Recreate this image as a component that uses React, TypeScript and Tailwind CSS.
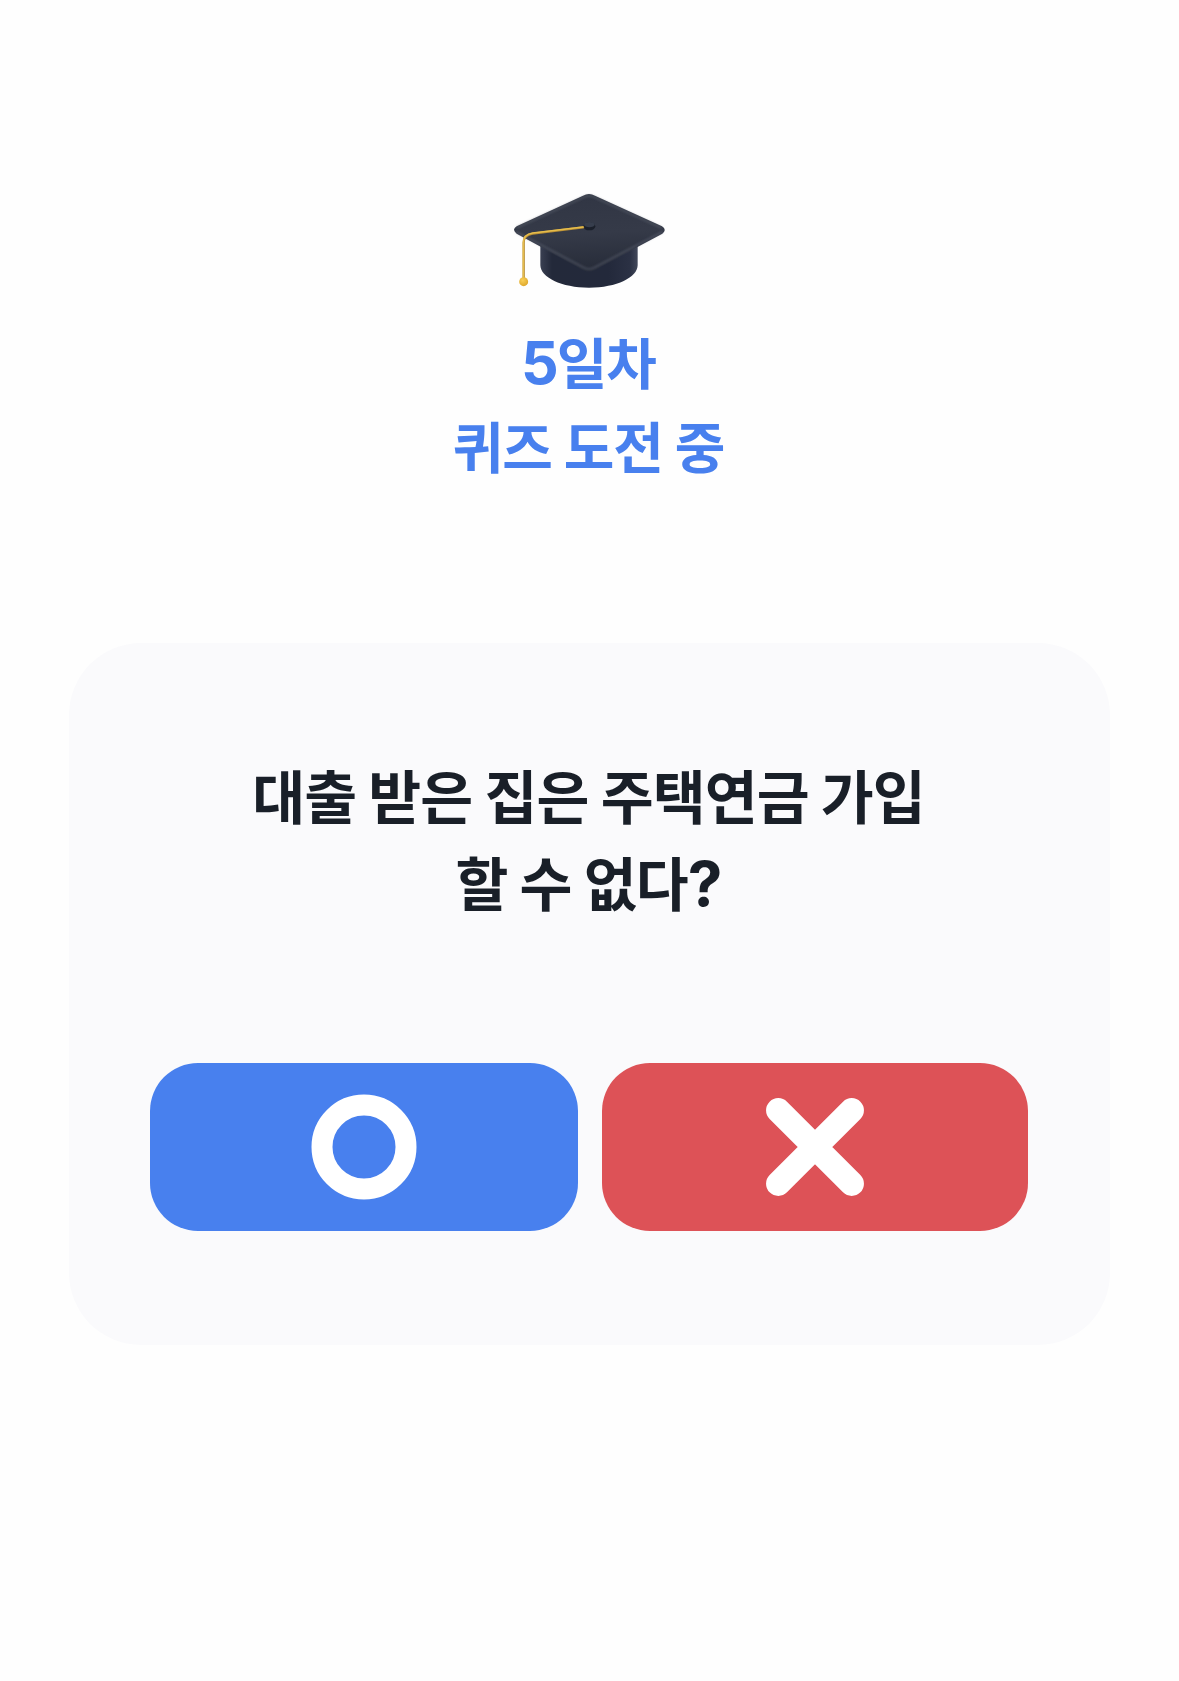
const KOREAN = "font-['Noto_Sans_CJK_KR',sans-serif]";

function GraduationCap() {
  return (
    <svg width="180" height="120" viewBox="0 0 540 360" aria-hidden="true">
      <defs>
        <linearGradient id="board" x1="0.5" y1="0" x2="0.6" y2="1">
          <stop offset="0" stopColor="#313644" />
          <stop offset="0.5" stopColor="#353a48" />
          <stop offset="1" stopColor="#262b38" />
        </linearGradient>
        <linearGradient id="base" x1="0" y1="0" x2="1" y2="0">
          <stop offset="0" stopColor="#3a4052" />
          <stop offset="0.12" stopColor="#23293a" />
          <stop offset="0.7" stopColor="#23293b" />
          <stop offset="0.92" stopColor="#2b3144" />
          <stop offset="1" stopColor="#42485a" />
        </linearGradient>
        <radialGradient id="bead" cx="0.4" cy="0.35" r="0.65">
          <stop offset="0" stopColor="#f9cf57" />
          <stop offset="1" stopColor="#dfa92d" />
        </radialGradient>
        <filter id="soft" x="-10%" y="-10%" width="120%" height="120%">
          <feGaussianBlur stdDeviation="3" />
        </filter>
      </defs>
      <path d="M121 170V255C121 292 184 323 267 323S413 292 413 255V170Z" fill="url(#base)" />
      <path
        d="M249 47Q267 37 285 47L486 139Q502 149 487 161L285 269Q267 279 249 269L50 161Q34 149 50 139Z"
        fill="url(#board)"
      />
      <path
        d="M48 155L252 263Q267 271 282 263L488 155"
        fill="none"
        stroke="#626879"
        strokeOpacity="0.55"
        strokeWidth="5"
        filter="url(#soft)"
      />
      <path
        d="M50 143L252 51Q267 44 282 51L484 143"
        fill="none"
        stroke="#575c68"
        strokeOpacity="0.7"
        strokeWidth="5"
        filter="url(#soft)"
      />
      <ellipse cx="268" cy="139" rx="18" ry="12" fill="#1b202b" />
      <ellipse cx="268" cy="134" rx="16" ry="8" fill="#373e4d" />
      <path d="M249 142L98 161Q71 165 71 188V298" fill="none" stroke="#b98f34" strokeWidth="7" strokeLinecap="round" />
      <path d="M249 141L98 159Q70 163 70 188V298" fill="none" stroke="#e5bc4c" strokeWidth="4" strokeLinecap="round" />
      <circle cx="71" cy="305" r="13.5" fill="url(#bead)" />
    </svg>
  );
}

export default function App() {
  return (
    <main className={`flex h-[1681px] w-[1179px] flex-col items-center bg-[#fefefe] pt-[180px] ${KOREAN}`}>
      <GraduationCap />
      <h1 className="mt-[18px] mr-[2px] flex h-[168px] flex-col items-center whitespace-nowrap text-[55px] leading-[84px] font-bold tracking-[-0.9px] text-[#4880ee]">
        <span>
          <span className="font-['Inter'] text-[59px] leading-none font-bold tracking-[-2px]">5</span>일차
        </span>
        <span>퀴즈 도전 중</span>
      </h1>
      <section className="mt-[157px] flex h-[702px] w-[1041px] flex-col items-center rounded-[72px] bg-[#fafafc] pt-[108px]">
        <h2 className="mr-[2px] flex h-[174px] flex-col items-center whitespace-nowrap text-[57.5px] leading-[87px] font-bold tracking-[-0.9px] text-[#191f28]">
          <span>대출 받은 집은 주택연금 가입</span>
          <span>
            할 수 없다<span className="font-['Inter'] text-[62px] leading-none font-bold">?</span>
          </span>
        </h2>
        <div className="mt-[138px] mr-[1px] flex w-[878px] justify-between">
          <button aria-label="O" className="flex h-[168px] w-[428px] items-center justify-center rounded-[48px] bg-[#4880ee]">
            <svg width="106" height="106" viewBox="-53 -53 106 106">
              <circle r="42" fill="none" stroke="white" strokeWidth="21" />
            </svg>
          </button>
          <button aria-label="X" className="flex h-[168px] w-[426px] items-center justify-center rounded-[48px] bg-[#dd5257]">
            <svg width="100" height="100" viewBox="-50 -50 100 100">
              <path d="M-36.7-36.7L36.7 36.7M36.7-36.7L-36.7 36.7" stroke="white" strokeWidth="24.5" strokeLinecap="round" />
            </svg>
          </button>
        </div>
      </section>
    </main>
  );
}
